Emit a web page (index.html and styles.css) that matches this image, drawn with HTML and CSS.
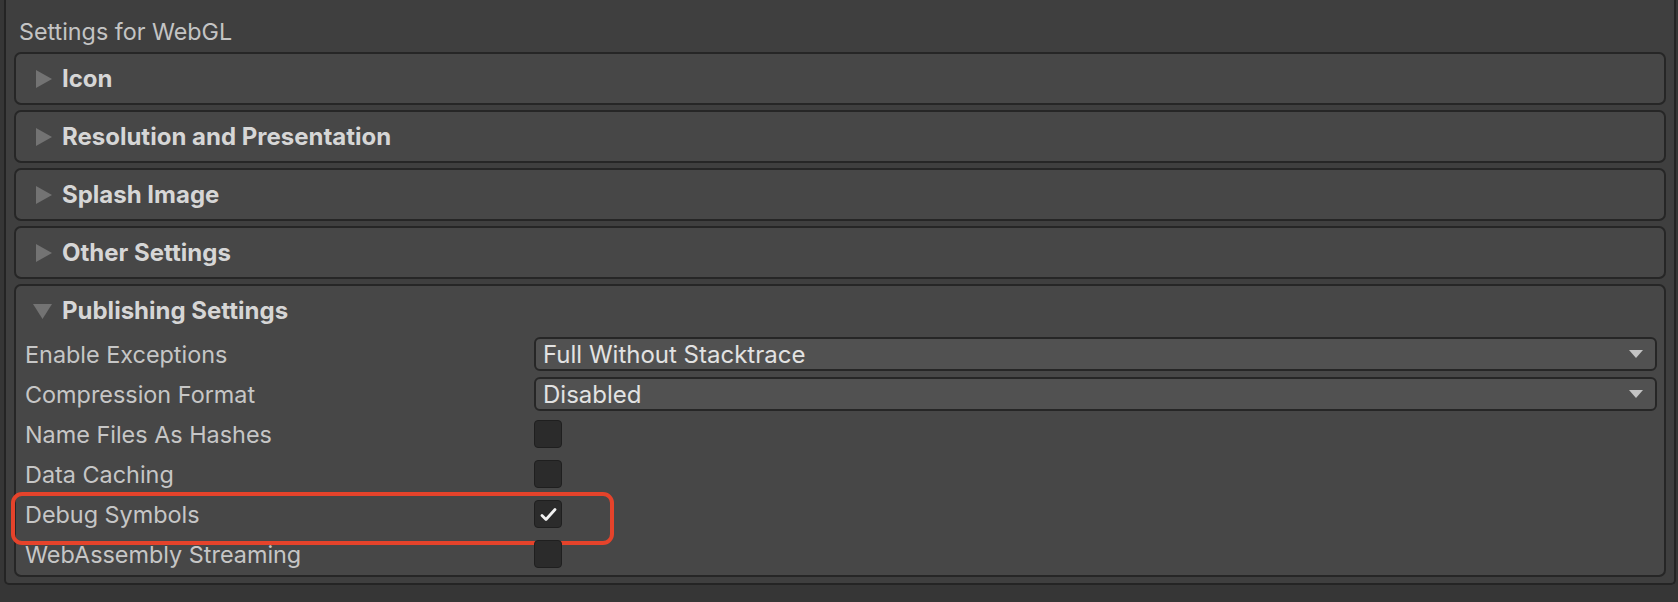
FILE: index.html
```html
<!DOCTYPE html>
<html>
<head>
<meta charset="utf-8">
<link rel="stylesheet" href="styles.css">
</head>
<body>
<div class="frame">
  <div class="title">Settings for WebGL</div>
  <div class="foldout">
    <div class="fold-head"><svg class="tri-right" width="16" height="18" viewBox="0 0 16 18"><polygon points="0,0 16,9 0,18" /></svg><span>Icon</span></div>
  </div>
  <div class="foldout">
    <div class="fold-head"><svg class="tri-right" width="16" height="18" viewBox="0 0 16 18"><polygon points="0,0 16,9 0,18" /></svg><span>Resolution and Presentation</span></div>
  </div>
  <div class="foldout">
    <div class="fold-head"><svg class="tri-right" width="16" height="18" viewBox="0 0 16 18"><polygon points="0,0 16,9 0,18" /></svg><span>Splash Image</span></div>
  </div>
  <div class="foldout">
    <div class="fold-head"><svg class="tri-right" width="16" height="18" viewBox="0 0 16 18"><polygon points="0,0 16,9 0,18" /></svg><span>Other Settings</span></div>
  </div>
  <div class="foldout open">
    <div class="fold-head"><svg class="tri-down" width="19" height="15" viewBox="0 0 19 15"><polygon points="0,0 19,0 9.5,15" /></svg><span>Publishing Settings</span></div>
    <div class="row">
      <div class="label">Enable Exceptions</div>
      <div class="dropdown"><span>Full Without Stacktrace</span><svg class="dd-arrow" width="14" height="8" viewBox="0 0 14 8"><polygon points="0,0 14,0 7,8" /></svg></div>
    </div>
    <div class="row">
      <div class="label">Compression Format</div>
      <div class="dropdown"><span>Disabled</span><svg class="dd-arrow" width="14" height="8" viewBox="0 0 14 8"><polygon points="0,0 14,0 7,8" /></svg></div>
    </div>
    <div class="row">
      <div class="label">Name Files As Hashes</div>
      <div class="checkbox"></div>
    </div>
    <div class="row">
      <div class="label">Data Caching</div>
      <div class="checkbox"></div>
    </div>
    <div class="row highlighted">
      <div class="label">Debug Symbols</div>
      <div class="checkbox"><svg width="27" height="27" viewBox="0 0 27 27"><polyline points="7,14.5 11,18.5 20,8.5" fill="none" stroke="#f2f2f2" stroke-width="2.8" stroke-linecap="round" stroke-linejoin="round"/></svg></div>
      <span class="highlight"></span>
    </div>
    <div class="row">
      <div class="label">WebAssembly Streaming</div>
      <div class="checkbox"></div>
    </div>
  </div>
</div>
</body>
</html>
```

FILE: styles.css
```css
html, body {
  margin: 0;
  padding: 0;
  background: #363636;
  font-family: "Inter", "Noto Sans", sans-serif;
}

.frame {
  margin-left: 4px;
  height: 583px;
  background: #3f3f3f;
  border: 2px solid #242424;
  border-top: none;
  border-radius: 0 0 5px 5px;
  padding: 0 8px;
  box-sizing: content-box;
  width: 1652px;
}

.title {
  padding-top: 20px;
  line-height: 24px;
  height: 24px;
  margin-bottom: 8px;
  margin-left: 5px;
  font-size: 23.3px;
  color: #c4c4c4;
}

.foldout {
  background: #474747;
  border: 2px solid #262626;
  border-radius: 7px;
  margin-bottom: 5px;
}

.fold-head {
  height: 49px;
  display: flex;
  align-items: center;
  font-weight: 700;
  font-size: 24px;
  color: #d6d6d6;
}

.fold-head svg {
  fill: #737373;
  flex: none;
}

.tri-right {
  margin-left: 20px;
  margin-right: 10px;
}

.tri-down {
  margin-left: 17px;
  margin-right: 10px;
  margin-top: 2px;
}

.open .fold-head {
  height: 48px;
}

.open {
  padding-bottom: 1px;
}

.row {
  position: relative;
  height: 40px;
  display: flex;
  align-items: center;
}

.label {
  width: 509px;
  padding-left: 9px;
  flex: none;
  font-size: 23.4px;
  color: #c6c6c6;
}

.dropdown {
  flex: 1;
  margin-right: 7px;
  height: 30px;
  background: #515151;
  border: 2px solid #262626;
  border-radius: 6px;
  display: flex;
  align-items: center;
  justify-content: space-between;
  padding: 0 12px 0 7px;
  font-size: 24px;
  color: #e2e2e2;
}

.dd-arrow {
  fill: #c4c4c4;
}

.checkbox {
  width: 26px;
  height: 26px;
  background: #2b2b2b;
  border: 1px solid #1f1f1f;
  border-radius: 4px;
  display: flex;
}

.checkbox svg {
  margin: -0.5px;
}

.highlight {
  position: absolute;
  left: -5px;
  top: -2px;
  width: 595px;
  height: 45px;
  border: 4px solid #e5432b;
  border-radius: 11px;
}
```
